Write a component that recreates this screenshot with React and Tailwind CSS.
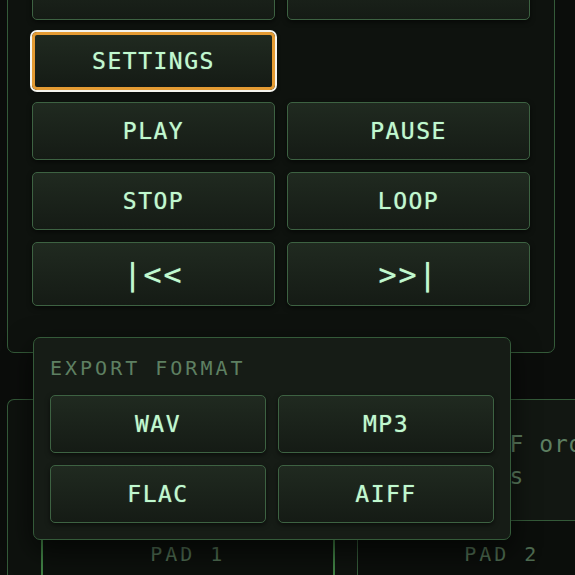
const btn =
  "flex items-center justify-center rounded-[5px] border bg-gradient-to-b from-[#202a20] to-[#151b15] text-[#c0f9cf] [text-shadow:0_0_1px_rgba(192,249,207,0.7)] shadow-[0_2px_5px_rgba(0,0,0,0.55)]";

function Btn({ children, className = "border-[#3d6242]", big }) {
  return (
    <button
      className={`${btn} ${big ? "h-[64px] text-[30px] tracking-[2px]" : "h-[58px] text-[23px] tracking-[1.5px]"} ${className}`}>
      {children}
    </button>
  );
}

export default function App() {
  return (
    <div className="relative h-[575px] w-[575px] overflow-hidden bg-[#0b0d0b] font-['DejaVu_Sans_Mono',monospace]">
      {/* transport panel, scrolled so its first row sits above the top */}
      <div className="ml-[7px] mt-[-63px] w-[548px] rounded-[7px] border border-[#345a39] bg-[#0e120e] px-[24px] pt-[24px] pb-[46px]">
        <div className="grid grid-cols-2 gap-x-[12px] gap-y-[12px]">
          <Btn />
          <Btn />
          <Btn className="border-[3px] border-[#e49b33] ring-2 ring-[#f4f4ee]">SETTINGS</Btn>
          <div />
          <Btn>PLAY</Btn>
          <Btn>PAUSE</Btn>
          <Btn>STOP</Btn>
          <Btn>LOOP</Btn>
          <Btn big>|&lt;&lt;</Btn>
          <Btn big>&gt;&gt;|</Btn>
        </div>
      </div>

      {/* pads / info panel behind the menu */}
      <div className="ml-[7px] mt-[46px] h-[300px] w-[640px] rounded-tl-[7px] border-l border-t border-[#345a39] bg-[#0e120e]">
        <div className="ml-[337px] h-[120px] bg-[#121712] pl-[16px] pt-[28px] text-[23px] leading-[32px] tracking-[1px] whitespace-pre text-[#5d7f61]">
          Render AIFF order
          <br />
          24-bit WAVs
        </div>
        <div className="flex">
          <div className="ml-[33px] h-[80px] w-[297px] border-2 border-[#3f7f43] bg-[#0c100c] pt-[18px] text-center text-[20px] leading-[28px] tracking-[3px] text-[#4d6a50]">
            PAD 1
          </div>
          <div className="ml-[22px] h-[80px] w-[294px] border border-[#345a39] bg-[#0b0e0b] pt-[19px] text-center text-[20px] leading-[28px] tracking-[3px] text-[#4d6a50]">
            PAD 2
          </div>
        </div>
      </div>

      {/* export format menu */}
      <div className="absolute left-[33px] top-[337px] w-[478px] rounded-[7px] border border-[#345a39] bg-[#161c16] px-[16px] pt-[16px] pb-[16px] shadow-[0_10px_28px_rgba(0,0,0,0.65)]">
        <div className="mb-[13px] text-[20px] leading-[28px] tracking-[3px] text-[#5e8062]">EXPORT FORMAT</div>
        <div className="grid grid-cols-2 gap-x-[12px] gap-y-[12px]">
          <Btn>WAV</Btn>
          <Btn>MP3</Btn>
          <Btn>FLAC</Btn>
          <Btn>AIFF</Btn>
        </div>
      </div>
    </div>
  );
}
